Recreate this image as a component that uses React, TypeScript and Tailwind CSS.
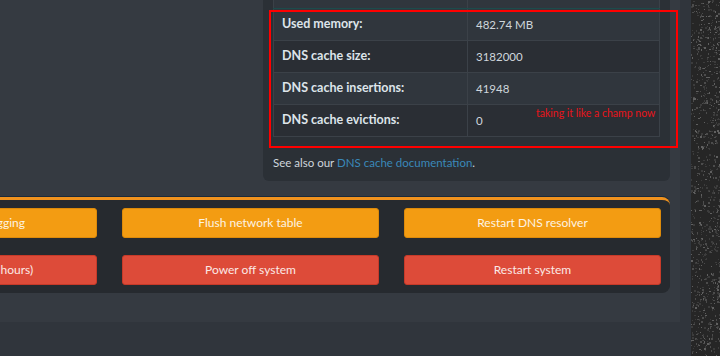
import React from "react";

const rows = [
  ["Used memory:", "482.74 MB"],
  ["DNS cache size:", "3182000"],
  ["DNS cache insertions:", "41948"],
  ["DNS cache evictions:", "0"],
];

function Noise() {
  const dots: React.ReactNode[] = [];
  let s = 12345;
  const rnd = () => {
    s = (s * 1103515245 + 12345) % 2147483648;
    return s / 2147483648;
  };
  for (let i = 0; i < 900; i++) {
    const x = Math.floor(rnd() * 29);
    const y = Math.floor(rnd() * 356);
    const c = rnd();
    const fill = c < 0.5 ? "#3c3c3c" : c < 0.8 ? "#4c4c4c" : "#606060";
    dots.push(<rect key={i} x={x} y={y} width={rnd() < 0.4 ? 2 : 1} height={rnd() < 0.4 ? 2 : 1} fill={fill} />);
  }
  return (
    <svg width="29" height="356" className="block">
      <rect width="29" height="356" fill="#262626" />
      {dots}
    </svg>
  );
}

export default function App() {
  return (
    <div
      className="w-[720px] h-[356px] overflow-hidden flex bg-[#30353c] text-[12px]"
      style={{ fontFamily: "Lato, 'Liberation Sans', sans-serif" }}
    >
      <div className="w-[691px] shrink-0">
        <div className="w-[680px] h-[322px] bg-[#353a41] flex flex-col overflow-hidden">
          {/* top card */}
          <div className="ml-[263px] w-[407px] mt-[-24px] bg-[#2b3036] rounded-b-[6px] px-[10px] pb-[8px] relative">
            <table className="w-[387px] border-collapse">
              <tbody>
                <tr className="h-[32px] bg-[#30363d]">
                  <td className="w-[194px] border border-[#3b4148] border-b-[#1c4b4b]"></td>
                  <td className="border border-[#3b4148] border-b-[#1c4b4b]"></td>
                </tr>
                {rows.map(([k, v], i) => (
                  <tr key={k} className={`h-[32px] ${i % 2 === 0 ? "bg-[#30363d]" : "bg-[#2a2e34]"}`}>
                    <td className="border border-[#3b4148] px-[8px] font-bold text-[12.5px] text-[#dde4ea]">{k}</td>
                    <td className="border border-[#3b4148] px-[8px] text-[11.5px] text-[#cfd6dc] relative">
                      {v}
                      {i === 3 && (
                        <span className="absolute left-[68px] top-[1px] whitespace-nowrap text-[10.5px] text-[#e8141a]">
                          taking it like a champ now
                        </span>
                      )}
                    </td>
                  </tr>
                ))}
              </tbody>
            </table>
            <div className="pt-[16px] text-[11.5px] text-[#cfd6dc] leading-[20px]">
              See also our <span className="text-[#3a88b9]">DNS cache documentation</span>.
            </div>
            <div className="absolute left-[6px] top-[34px] w-[409px] h-[138px] border-2 border-[#ff0000] pointer-events-none"></div>
          </div>

          {/* bottom panel */}
          <div className="ml-[-170px] mt-[16px] w-[840px] bg-[#262a2f] rounded-tr-[8px] rounded-br-[8px] border-t-[3px] border-[#f0921e] shadow-[0_-1px_0_#1b2a3a] pl-[10px] pr-[9px] pt-[8px] pb-[8px] grid grid-cols-[257px_257px_257px] gap-x-[25px] gap-y-[17px]">
            {[
              ["Disable query logging", "o"],
              ["Flush network table", "o"],
              ["Restart DNS resolver", "o"],
              ["Flush logs (last 24 hours)", "r"],
              ["Power off system", "r"],
              ["Restart system", "r"],
            ].map(([t, c]) => (
              <div
                key={t}
                className={`h-[30px] rounded-[3px] border flex items-center justify-center text-[12px] ${
                  c === "o"
                    ? "bg-[#f39c12] border-[#dd8a0a] text-[#fdf3e2]"
                    : "bg-[#dd4b39] border-[#c73a29] text-[#fbe9e6]"
                }`}
              >
                {t}
              </div>
            ))}
          </div>
        </div>
      </div>
      <div className="w-[29px] shrink-0">
        <Noise />
      </div>
    </div>
  );
}
